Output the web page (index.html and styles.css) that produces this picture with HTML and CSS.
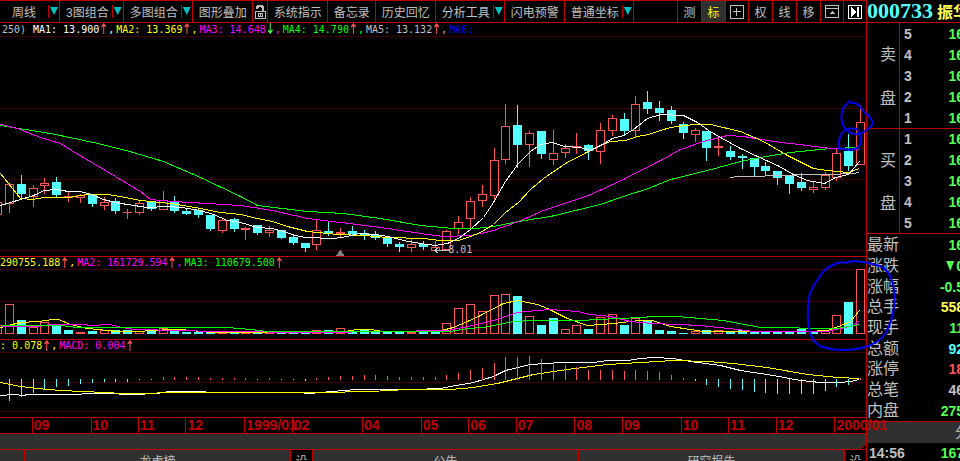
FILE: index.html
```html
<!DOCTYPE html>
<html lang="zh-CN">
  <head>
    <meta charset="UTF-8" />
    <meta name="viewport" content="width=device-width, initial-scale=1.0" />
    <title>000733 周线</title>
    <link rel="stylesheet" href="styles.css">
  </head>

  <body>
    <main class="left">
      <nav class="toolbar">
        <button class="tool drop wide">周线<span class="arrow"></span></button>
        <button class="tool drop">3图组合<span class="arrow"></span></button>
        <button class="tool drop">多图组合<span class="arrow"></span></button>
        <button class="tool">图形叠加</button>
        <button class="tool lock" aria-label="锁定">
          <svg width="12" height="16" viewBox="0 0 12 16" shape-rendering="crispEdges">
            <path d="M3 5V3H4V2H8V3H9V7" fill="none" stroke="#c0c0c0" stroke-width="2" />
            <path d="M1.500 7.500H11.500V14.500H1.500Z" fill="none" stroke="#c0c0c0" />
            <path d="M4.500 9.500H8.500V12.500H4.500ZM6.500 10V13" fill="none" stroke="#c0c0c0" />
          </svg>
        </button>
        <button class="tool">系统指示</button>
        <button class="tool">备忘录</button>
        <button class="tool">历史回忆</button>
        <button class="tool drop">分析工具<span class="arrow"></span></button>
        <button class="tool">闪电预警</button>
        <button class="tool drop">普通坐标<span class="arrow"></span></button>
        <div class="tool-right">
          <button class="mini">测</button>
          <button class="mini active">标</button>
          <button class="mini icon" aria-label="十字">
            <svg width="14" height="14" viewBox="0 0 14 14" shape-rendering="crispEdges">
              <path d="M.5 .5H13.5V13.5H.5ZM6.500 3V11M3 6.500H11" fill="none" stroke="#c0c0c0" />
            </svg>
          </button>
          <button class="mini">权</button>
          <button class="mini">线</button>
          <button class="mini">移</button>
          <button class="mini icon" aria-label="窗口">
            <svg width="14" height="14" viewBox="0 0 14 14" shape-rendering="crispEdges">
              <path d="M.5 .5H13.5V12.5H.5ZM.5 3.500H13.5" fill="none" stroke="#c0c0c0" />
              <path d="M7 6L10 9H4Z" fill="#c0c0c0" />
            </svg>
          </button>
          <button class="mini icon" aria-label="下一个">
            <svg width="14" height="14" viewBox="0 0 14 14" shape-rendering="crispEdges">
              <path d="M.5 .5H13.5V13.5H.5Z" fill="none" stroke="#fff" />
              <path d="M3 2L8 7L3 12ZM9 2H11V12H9Z" fill="#fff" />
            </svg>
          </button>
        </div>
      </nav>

      <section class="panel">
        <div class="legend main-legend">
          <span class="gray range">250)</span>
          <span class="white">MA1: 13.900</span><i class="up"></i><span class="comma white">,</span>
          <span class="yellow">MA2: 13.369</span><i class="up"></i><span class="comma yellow">,</span>
          <span class="magenta">MA3: 14.648</span><i class="down"></i><span class="comma magenta">,</span>
          <span class="green">MA4: 14.790</span><i class="up"></i><span class="comma green">,</span>
          <span class="gray">MA5: 13.132</span><i class="up"></i><span class="comma gray">,</span>
          <span class="blue">MA6:</span>
        </div>
        <svg id="price" class="chart price" viewBox="0 36 866 220" preserveAspectRatio="none"></svg>
        <span class="low">8.01</span>
      </section>

      <section class="panel">
        <div class="legend">
          <span class="yellow">290755.188</span><i class="up"></i><span class="comma yellow">,</span>
          <span class="magenta">MA2: 161729.594</span><i class="up"></i><span class="comma magenta">,</span>
          <span class="green">MA3: 110679.500</span><i class="up"></i>
        </div>
        <svg id="volume" class="chart volume" viewBox="0 269 866 70" preserveAspectRatio="none"></svg>
      </section>

      <section class="panel">
        <div class="legend cut">
          <span class="yellow">DEA: 0.078</span><i class="up"></i><span class="comma yellow">,</span>
          <span class="magenta">MACD: 0.004</span><i class="up"></i>
        </div>
        <svg id="macd" class="chart macd" viewBox="0 352 866 65" preserveAspectRatio="none"></svg>
      </section>

      <div class="axis">
        <span class="first"></span>
        <span class="w5">09</span>
        <span class="w4">10</span>
        <span class="w4">11</span>
        <span class="w5">12</span>
        <span class="w4">1999/01</span>
        <span class="w6">02</span>
        <span class="w5">04</span>
        <span class="w4">05</span>
        <span class="w4">06</span>
        <span class="w5">07</span>
        <span class="w4">08</span>
        <span class="w5">09</span>
        <span class="w4">10</span>
        <span class="w4">11</span>
        <span class="w5">12</span>
        <span class="last">2000/01</span>
      </div>
      <div class="scroll">
        <svg width="5" height="15" viewBox="0 0 5 15">
          <path d="M5 10V15H0Z" fill="#000" />
          <path d="M4.500 0V10L.5 14.500" fill="none" stroke="#c00000" />
        </svg>
      </div>
      <div class="tabs">
        <span class="stub"></span>
        <button class="tab">龙虎榜</button>
        <button class="set">设</button>
        <button class="tab">公告</button>
        <button class="tab">研究报告</button>
        <button class="set">设</button>
      </div>
    </main>

    <aside class="side">
      <h1 class="stock"><span class="code">000733</span><span class="name">振华</span></h1>

      <div class="book">
        <div class="book-name"><span>卖</span><span>盘</span></div>
        <table>
          <tr><th>5</th><td>16</td></tr>
          <tr><th>4</th><td>16</td></tr>
          <tr><th>3</th><td>16</td></tr>
          <tr><th>2</th><td>16</td></tr>
          <tr><th>1</th><td>16</td></tr>
        </table>
      </div>
      <div class="book">
        <div class="book-name"><span>买</span><span>盘</span></div>
        <table>
          <tr><th>1</th><td>16</td></tr>
          <tr><th>2</th><td>16</td></tr>
          <tr><th>3</th><td>16</td></tr>
          <tr><th>4</th><td>16</td></tr>
          <tr><th>5</th><td>16</td></tr>
        </table>
      </div>

      <dl class="stats">
        <div><dt>最新</dt><dd>16</dd></div>
        <div><dt>涨跌</dt><dd><span class="tri"></span>0</dd></div>
        <div><dt>涨幅</dt><dd>-0.5</dd></div>
        <div><dt>总手</dt><dd class="c-yellow">558</dd></div>
        <div><dt>现手</dt><dd>11</dd></div>
        <div><dt>总额</dt><dd class="c-cyan">92</dd></div>
        <div><dt>涨停</dt><dd class="c-red">18</dd></div>
        <div><dt>总笔</dt><dd class="c-gray">46</dd></div>
        <div><dt>内盘</dt><dd>275</dd></div>
      </dl>

      <div class="ticks-head">分</div>
      <div class="tick"><span>14:56</span><span class="tick-price">167</span></div>
    </aside>

    <!-- hand drawn marks -->
    <svg class="marks" viewBox="0 0 960 461" preserveAspectRatio="none">
      <path d="M848 101Q850 103 853 103Q858 103 861 108Q864 113 868 115Q871 118 873 123Q872 126 868 129Q861 135 855 134Q848 133 844 127Q840 119 842 112Q843 107 848 103" />
      <path d="M840 137Q842 132 847 129Q853 128 857 129Q860 133 861 139Q861 145 857 148Q851 151 845 149Q841 148 839 149Q838 143 840 136" />
      <path d="M847 263Q841 261 835 264Q827 267 822 273L816 282Q808 293 808 307Q807 322 810 332Q812 341 820 346Q831 350 842 350Q858 350 868 346Q879 342 885 334Q892 322 894 308Q896 293 892 281Q889 270 880 266Q868 262 855 261Q850 261 846 263" />
    </svg>

    <script src="script.js"></script>
  </body>
</html>
```
FILE: styles.css
```css
* {
  box-sizing: border-box;
}
body {
  margin: 0;
  height: 100vh;
  display: grid;
  grid-template-columns: minmax(0, 1fr) 93px;
  position: relative;
  overflow: hidden;
  background: #000;
  color: #c0c0c0;
  font-family: "Liberation Sans", "Noto Sans CJK SC", sans-serif;
  font-size: 12px;
}
button {
  margin: 0;
  padding: 0;
  border: 0;
  background: none;
  color: inherit;
  font: inherit;
  white-space: nowrap;
}
.left {
  border-right: 1px solid #c00000;
  min-width: 0;
}

/* toolbar */
.toolbar {
  display: flex;
  height: 23px;
  border-top: 1px solid #c00000;
  border-bottom: 1px solid #c00000;
}
.tool {
  display: flex;
  align-items: center;
  padding: 0 5px 0 6px;
  border-right: 1px solid #c00000;
}
.drop {
  padding-right: 0;
}
.wide {
  padding-left: 12px;
}
.arrow {
  display: flex;
  justify-content: center;
  width: 11px;
  height: 13px;
  margin-left: 3px;
  padding-top: 2px;
  border-left: 1px solid #c00000;
}
.wide .arrow {
  margin-left: 12px;
}
.arrow::before {
  content: "";
  width: 8px;
  height: 8px;
  background: #00c0c0;
  clip-path: polygon(0 0, 100% 0, 50% 100%);
}
.lock {
  padding: 0 1px;
}
.tool-right {
  display: flex;
  margin-left: auto;
}
.mini {
  display: flex;
  align-items: center;
  justify-content: center;
  width: 24px;
  border-left: 1px solid #c00000;
}
.icon {
  width: 23px;
}
.active {
  background: #303030;
  color: #ffff00;
}

/* chart panels */
.panel {
  position: relative;
  border-bottom: 1px solid #c00000;
}
.legend {
  display: flex;
  height: 12px;
  line-height: 12px;
  font-family: "DejaVu Sans Mono", monospace;
  font-size: 10px;
  white-space: nowrap;
}
.main-legend {
  height: 13px;
  line-height: 13px;
}
.cut {
  margin-left: -18px;
}
.range {
  width: 33px;
  padding-left: 2px;
}
.legend i {
  width: 5px;
  height: 11px;
  margin: 0 2px;
}
.comma {
  width: 8px;
}
.up {
  background: #ff5454;
  clip-path: polygon(50% 0, 100% 30%, 100% 40%, 60% 30%, 60% 100%, 40% 100%, 40% 30%, 0 40%, 0 30%);
}
.down {
  background: #54ff54;
  clip-path: polygon(50% 100%, 100% 70%, 100% 60%, 60% 70%, 60% 0, 40% 0, 40% 70%, 0 60%, 0 70%);
}
.gray {
  color: #c0c0c0;
}
.white {
  color: #fff;
}
.yellow {
  color: #ffff00;
}
.magenta {
  color: #ff00ff;
}
.green {
  color: #00ff00;
}
.blue {
  color: #0000ff;
}
.chart {
  display: block;
  width: 100%;
  shape-rendering: crispEdges;
}
.price {
  height: 220px;
}
.volume {
  height: 70px;
}
.macd {
  height: 65px;
}
.low {
  position: absolute;
  left: 52%;
  bottom: 0;
  margin-left: -2px;
  font: 10px/12px "DejaVu Sans Mono", monospace;
}

/* dates */
.axis {
  display: flex;
  position: relative;
  z-index: 1;
  height: 16px;
  border-bottom: 1px solid #c00000;
  color: #c00000;
  font-size: 14px;
  font-weight: bold;
  line-height: 15px;
}
.axis span {
  min-width: 0;
  flex: 5 1 0;
  padding-left: 1px;
  border-left: 1px solid #c00000;
  white-space: nowrap;
}
.axis .w4 {
  flex-grow: 4;
}
.axis .w6 {
  flex-grow: 6;
}
.axis .first {
  flex-grow: 2.7;
  border-left: 0;
}
.axis .last {
  flex-grow: 2.6;
}
.scroll {
  display: flex;
  justify-content: flex-end;
  height: 15px;
  background: #303030;
}
.tabs {
  display: flex;
  height: 22px;
  border-top: 1px solid #c00000;
  background: #303030;
}
.stub {
  width: 24px;
}
.tab,
.set {
  border-left: 1px solid #c00000;
}
.tab {
  flex: 1;
}
.set {
  width: 22px;
  background: #000;
}

/* quote column */
.side {
  display: flex;
  flex-direction: column;
  min-width: 0;
  font-size: 14px;
}
.stock {
  display: flex;
  align-items: center;
  height: 23px;
  margin: 0;
  border-bottom: 1px solid #c00000;
  white-space: nowrap;
}
.code {
  color: #54ffff;
  font: bold 22px/22px "Liberation Serif", serif;
}
.name {
  margin-left: 4px;
  color: #ffff54;
  font: bold 16px/22px "Noto Sans CJK SC", sans-serif;
}
.book {
  display: flex;
  height: 105px;
  border-bottom: 1px solid #c00000;
}
.book:first-of-type {
  height: 106px;
}
.book-name {
  display: flex;
  flex-direction: column;
  justify-content: space-evenly;
  width: 33px;
  padding: 3px 0 0 13px;
  border-right: 1px solid #c00000;
  font-size: 16px;
  line-height: 28px;
}
.book table {
  flex: 1;
  margin-right: -4px;
  border-collapse: collapse;
}
.book th,
.book td {
  padding: 0;
  font-weight: bold;
}
.book th {
  width: 12px;
  padding-left: 4px;
}
.book td {
  color: #54ff54;
  text-align: right;
}
.stats {
  display: flex;
  flex-direction: column;
  height: 187px;
  margin: 0;
  padding-top: 1px;
}
.stats div {
  display: flex;
  flex: 1;
  align-items: center;
  justify-content: space-between;
  min-height: 0;
  margin-right: -4px;
  line-height: 20px;
}
.stats dt {
  font-size: 16px;
}
.stats dd {
  margin: 0;
  color: #54ff54;
  font-weight: bold;
}
.tri {
  display: inline-block;
  width: 8px;
  height: 10px;
  margin-right: 2px;
  background: #54ff54;
  clip-path: polygon(0 0, 100% 0, 50% 100%);
}
.stats .c-yellow {
  color: #ffff54;
}
.stats .c-cyan {
  color: #54ffff;
}
.stats .c-red {
  color: #ff5454;
}
.stats .c-gray {
  color: #c0c0c0;
}
.ticks-head {
  height: 22px;
  margin-right: -9px;
  border-top: 1px solid #c00000;
  background: #303030;
  line-height: 20px;
  text-align: right;
}
.tick {
  display: flex;
  justify-content: space-between;
  margin-right: -4px;
  padding-left: 2px;
  font-weight: bold;
  line-height: 20px;
}
.tick-price {
  color: #54ff54;
}

.marks {
  position: absolute;
  z-index: 2;
  width: 100%;
  height: 100%;
  pointer-events: none;
  fill: none;
  stroke: #0000f0;
  stroke-width: 2;
}
```
FILE: script.js
```js
const RED = "#ff5454";
const CYAN = "#54ffff";
const GRID = "#400000";

// high, top, bottom, low, rising
const candles = [
  [202, 202, 214, 214, 1], [182, 184, 203, 212, 1], [175, 184, 194, 198, 0], [185, 188, 196, 206, 1],
  [178, 183, 185, 193, 1], [177, 182, 195, 196, 0], [192, 196, 197, 201, 1], [194, 195, 197, 202, 1],
  [195, 195, 204, 206, 0], [197, 202, 205, 209, 1], [198, 201, 211, 213, 0], [209, 212, 212, 218, 1],
  [200, 203, 212, 214, 1], [201, 202, 209, 210, 0], [191, 200, 209, 209, 1], [196, 201, 211, 212, 0],
  [208, 211, 214, 214, 0], [208, 210, 215, 217, 0], [215, 215, 229, 230, 0], [218, 220, 230, 232, 1],
  [218, 219, 229, 231, 0], [227, 228, 229, 239, 1], [225, 225, 233, 234, 0], [226, 230, 232, 236, 1],
  [230, 230, 238, 238, 0], [234, 237, 243, 244, 0], [243, 243, 248, 251, 0], [219, 230, 244, 249, 1],
  [221, 231, 234, 235, 0], [228, 232, 233, 236, 1], [226, 231, 234, 234, 0], [230, 233, 236, 239, 0],
  [231, 235, 238, 239, 0], [238, 238, 244, 246, 0], [242, 244, 247, 251, 0], [239, 244, 247, 251, 1],
  [241, 244, 247, 249, 0], [241, 247, 250, 250, 1], [230, 231, 249, 250, 1], [216, 222, 228, 233, 1],
  [197, 201, 218, 227, 1], [185, 194, 200, 206, 1], [148, 160, 195, 201, 1], [104, 126, 159, 163, 1],
  [105, 125, 145, 167, 0], [131, 133, 144, 166, 1], [131, 131, 154, 158, 0], [130, 153, 159, 164, 1],
  [144, 148, 152, 157, 1], [133, 146, 147, 153, 1], [144, 145, 151, 159, 0], [123, 130, 151, 163, 1],
  [115, 118, 130, 135, 1], [113, 119, 131, 135, 0], [96, 104, 130, 136, 1], [91, 102, 109, 113, 0],
  [101, 108, 113, 120, 0], [106, 110, 121, 123, 0], [122, 124, 133, 138, 0], [128, 130, 134, 141, 1],
  [131, 131, 148, 160, 0], [137, 146, 147, 155, 1], [146, 151, 157, 159, 0], [154, 156, 158, 168, 0],
  [158, 158, 167, 175, 0], [162, 166, 171, 174, 0], [171, 171, 178, 184, 0], [175, 176, 184, 193, 0],
  [173, 182, 188, 190, 0], [181, 187, 189, 192, 1], [172, 175, 187, 189, 1], [148, 153, 177, 180, 1],
  [134, 151, 166, 170, 0], [105, 122, 164, 164, 1]
];

// top of each volume bar, negative when falling
const volumes = [
  325, 304, -320, 327, 322, -325, -330, 332, -331, 330, -330, -330, 331, -330, 328, -330,
  -332, -332, -331, 332, -332, 332, -332, 332, -332, -332, -332, 330, -330, 328, -331, -329,
  -331, -331, -331, 332, -332, -332, 323, 308, 304, 311, 295, 294, -296, 316, -325, -318,
  329, 325, -329, 317, 314, -325, 318, -321, -330, -331, -333, 331, -330, 330, -331, -330,
  -331, -332, -332, -332, -329, -332, 331, 315, -302, 269
];

// end of each macd bar, zero line is at 379
const macd = [
  399, 400, 396, 392, 388, 386, 385, 383, 382, 381, 381, 381, 379, 379, 377, 377,
  377, 377, 378, 378, 378, 378, 379, 378, 379, 379, 380, 378, 377, 376, 376, 375,
  375, 376, 377, 377, 377, 377, 375, 373, 370, 368, 363, 357, 357, 356, 359, 362,
  365, 367, 370, 370, 370, 371, 370, 371, 372, 375, 378, 380, 384, 386, 388, 389,
  391, 392, 393, 393, 393, 393, 390, 386, 384, 378
];

const priceLines = {
  "#c0c0c0": "730,177 737,176 793,175 797,174 827,174 853,173 859,172",
  "#00ff00": "0,125 50,133 93,142 126,150 163,161 200,177 240,196 257,205 307,211 343,213 380,218 420,225 453,228 475,228 493,226 518,221 550,216 600,204 623,196 648,188 660,183 670,179 707,170 740,161 760,157 790,152 830,148 859,147",
  "#ff00ff": "0,124 17,128 40,137 60,143 71,150 115,176 128,184 140,191 150,199 173,201 207,203 240,205 272,210 307,218 340,222 373,226 407,231 427,234 443,236 470,235 480,233 493,230 518,221 543,210 588,195 623,179 660,160 680,149 703,141 727,135 743,136 773,141 807,145 830,148 859,149",
  "#ffff00": "0,173 20,198 32,199 43,197 68,197 87,194 107,194 120,196 140,200 170,203 200,208 220,212 240,214 257,218 272,221 287,226 307,231 337,234 363,235 387,237 423,238 440,240 458,240 470,236 480,232 493,224 505,212 518,202 530,189 543,178 565,163 588,151 600,145 610,141 625,140 637,136 648,134 660,130 670,127 693,124 710,124 740,131 763,141 787,155 813,168 827,170 848,172 859,168",
  "#ffffff": "0,205 10,202 20,199 33,195 44,190 56,189 68,191 80,191 91,194 103,199 115,202 127,204 147,207 167,206 181,207 200,210 213,214 227,220 240,222 257,227 272,228 283,231 295,235 305,237 333,238 347,236 358,233 375,234 388,236 403,240 420,243 435,245 447,243 458,238 470,229 483,217 493,202 505,181 518,163 530,151 540,144 552,142 564,146 580,147 590,150 600,145 612,138 623,135 633,129 647,118 660,114 683,115 697,122 708,130 720,137 740,148 757,156 777,165 793,174 807,180 824,183 835,177 848,174 859,161"
};

const volumeLines = {
  "#ffff00": "0,327 20,322 38,321 52,319 58,319 70,324 87,328 117,331 133,331 157,330 167,329 180,329 200,331 213,332 320,332 345,331 357,329 370,329 383,331 437,331 453,327 467,321 480,315 503,303 517,300 537,304 547,308 567,318 587,325 613,323 630,321 640,320 652,320 670,326 690,329 703,331 807,331 827,330 838,326 850,321 859,310",
  "#ff00ff": "0,326 37,326 50,324 83,324 90,325 110,324 117,326 133,329 180,330 213,331 320,332 447,330 467,326 493,320 517,312 537,310 550,309 577,311 590,314 610,316 630,321 652,323 700,325 737,329 753,331 827,331 840,328 853,325 859,320",
  "#00ff00": "0,325 60,325 77,327 227,327 250,329 267,331 320,331 450,331 467,328 483,327 513,321 533,320 580,320 597,319 640,317 653,316 677,316 723,320 760,327 837,328 859,324"
};

const macdLines = {
  "#ffffff": "0,395 13,394 23,395 27,394 73,394 90,393 113,393 123,394 133,394 157,393 168,391 203,391 207,392 297,392 310,393 320,392 343,390 357,389 413,389 440,388 450,386 473,382 493,376 505,370 530,364 560,362 593,362 607,360 627,360 640,358 653,357 673,358 690,361 720,365 740,370 773,375 800,380 820,382 840,382 850,381 859,379",
  "#ffff00": "0,382 20,386 37,388 60,390 83,391 123,393 153,393 160,392 320,392 370,391 407,389 450,389 473,387 497,383 517,378 533,374 567,369 607,364 640,362 673,360 707,361 733,363 767,367 807,374 837,377 859,378"
};

// x of the candle, the first one is cut by the left edge
function xAt(i) {
  return Math.round(9 + (i - 1) * 11.82);
}

function add(parent, tag, attrs) {
  const el = document.createElementNS("http://www.w3.org/2000/svg", tag);
  for (const key in attrs) {
    el.setAttribute(key, attrs[key]);
  }
  parent.appendChild(el);
  return el;
}

function line(parent, x1, y1, x2, y2, color) {
  add(parent, "path", { d: `M${x1} ${y1}L${x2} ${y2}`, stroke: color, fill: "none" });
}

// a rect, so that both end pixels are filled
function stem(parent, x, y1, y2, color) {
  add(parent, "rect", { x: x - 0.5, y: y1 - 0.5, width: 1, height: y2 - y1 + 1, fill: color });
}

function bar(parent, x, top, bottom, rising) {
  const box = { x: x - 4, y: top, width: 8, height: Math.max(bottom - top, 0.01) };
  box.stroke = rising ? RED : CYAN;
  box.fill = rising ? "none" : CYAN;
  add(parent, "rect", box);
}

function start(id, rows) {
  const g = add(document.querySelector(id), "g", { transform: "translate(.5 .5)" });
  rows.forEach(y => line(g, -1, y, 866, y, GRID));
  return g;
}

function drawLines(g, lines) {
  for (const color in lines) {
    add(g, "polyline", { points: lines[color], stroke: color, fill: "none" });
  }
}

const price = start("#price", [36, 108, 179, 250]);
candles.forEach((c, i) => {
  const x = xAt(i);
  const color = c[4] ? RED : CYAN;
  stem(price, x, c[0], c[1], color);
  stem(price, x, c[2], c[3], color);
  bar(price, x, c[1], c[4] ? c[2] : c[2] - 1, c[4]);
});
drawLines(price, priceLines);
add(price, "path", { d: "M449 250H434M438 247L434 250L438 253", stroke: "#c0c0c0", fill: "none" });
add(price, "path", { d: "M340 249L344 255H336Z", fill: "#808080" });

const volume = start("#volume", [269, 301, 333]);
volumes.forEach((v, i) => bar(volume, xAt(i), Math.abs(v), 333, v > 0));
drawLines(volume, volumeLines);

const osc = start("#macd", [352, 382, 411]);
drawLines(osc, macdLines);
macd.forEach((y, i) => {
  if (y < 379) {
    stem(osc, xAt(i), y, 379, RED);
  } else {
    stem(osc, xAt(i), 379, y, CYAN);
  }
});
```
